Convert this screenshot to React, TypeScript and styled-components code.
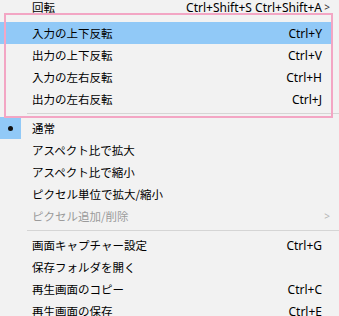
import styled, { createGlobalStyle } from "styled-components";

const GlobalStyle = createGlobalStyle`
  html, body {
    margin: 0;
    padding: 0;
    background: #f2f2f2;
    overflow: hidden;
  }
`;

const Menu = styled.div`
  position: relative;
  width: 339px;
  height: 316px;
  background: #f2f2f2;
  font-family: "Segoe UI", "Noto Sans", "Noto Sans CJK JP", sans-serif;
  color: #000;
  overflow: hidden;
  display: flex;
  flex-direction: column;
`;

const Row = styled.div<{ $active?: boolean; $disabled?: boolean; $h?: number }>`
  display: grid;
  grid-template-columns: 21px 1fr auto 9px;
  align-items: center;
  height: ${(p) => p.$h ?? 22}px;
  flex-shrink: 0;
  margin-right: 8px;
  background: ${(p) => (p.$active ? "#91c9f7" : "transparent")};
  color: ${(p) => (p.$disabled ? "#9b9b9b" : "#000")};
`;

const Check = styled.div<{ $on?: boolean }>`
  height: 100%;
  display: flex;
  align-items: center;
  justify-content: center;
  background: ${(p) => (p.$on ? "#91c9f7" : "transparent")};
`;

const Dot = styled.span`
  width: 5px;
  height: 5px;
  border-radius: 50%;
  background: #111;
`;

const Label = styled.span`
  padding-left: 11px;
  font-family: "Noto Sans CJK JP", sans-serif;
  font-size: 11.5px;
  white-space: nowrap;
`;

const Shortcut = styled.span`
  font-family: "Noto Sans", "Noto Sans CJK JP", sans-serif;
  font-size: 12px;
  white-space: nowrap;
  text-align: right;
`;

const Chevron = styled.span<{ $disabled?: boolean }>`
  font-family: "Noto Sans", sans-serif;
  font-size: 10px;
  color: ${(p) => (p.$disabled ? "#b5b5b5" : "#333")};
  text-align: right;
  padding-right: 1px;
`;

const Separator = styled.div`
  height: 7px;
  flex-shrink: 0;
  display: flex;
  align-items: center;
  padding-left: 27px;

  &::after {
    content: "";
    flex: 1;
    height: 1px;
    background: #d5d5d5;
  }
`;

const Annotation = styled.div`
  position: absolute;
  left: 4px;
  top: 13px;
  width: 325px;
  height: 101px;
  border: 2px solid #f3a6c4;
  pointer-events: none;
`;

type Item = {
  label: string;
  shortcut?: string;
  active?: boolean;
  checked?: boolean;
  disabled?: boolean;
  submenu?: boolean;
};

const group1: Item[] = [
  { label: "入力の上下反転", shortcut: "Ctrl+Y", active: true },
  { label: "出力の上下反転", shortcut: "Ctrl+V" },
  { label: "入力の左右反転", shortcut: "Ctrl+H" },
  { label: "出力の左右反転", shortcut: "Ctrl+J" },
];

const group2: Item[] = [
  { label: "通常", checked: true },
  { label: "アスペクト比で拡大" },
  { label: "アスペクト比で縮小" },
  { label: "ピクセル単位で拡大/縮小" },
  { label: "ピクセル追加/削除", disabled: true, submenu: true },
];

const group3: Item[] = [
  { label: "画面キャプチャー設定", shortcut: "Ctrl+G" },
  { label: "保存フォルダを開く" },
  { label: "再生画面のコピー", shortcut: "Ctrl+C" },
  { label: "再生画面の保存", shortcut: "Ctrl+E" },
];

const MenuRow = ({ item, h }: { item: Item; h?: number }) => (
  <Row $active={item.active} $disabled={item.disabled} $h={h}>
    <Check $on={item.checked}>{item.checked && <Dot />}</Check>
    <Label>{item.label}</Label>
    <Shortcut>{item.shortcut ?? ""}</Shortcut>
    <Chevron $disabled={item.disabled}>{item.submenu ? ">" : ""}</Chevron>
  </Row>
);

export default function App() {
  return (
    <Menu>
      <GlobalStyle />
      <Row $h={22} style={{ marginTop: -4, marginBottom: 4 }}>
        <Check />
        <Label>回転</Label>
        <Shortcut>Ctrl+Shift+S Ctrl+Shift+A</Shortcut>
        <Chevron>&gt;</Chevron>
      </Row>
      {group1.map((it) => (
        <MenuRow key={it.label} item={it} />
      ))}
      <Separator />
      {group2.map((it) => (
        <MenuRow key={it.label} item={it} />
      ))}
      <Separator />
      {group3.map((it) => (
        <MenuRow key={it.label} item={it} />
      ))}
      <Annotation />
    </Menu>
  );
}
